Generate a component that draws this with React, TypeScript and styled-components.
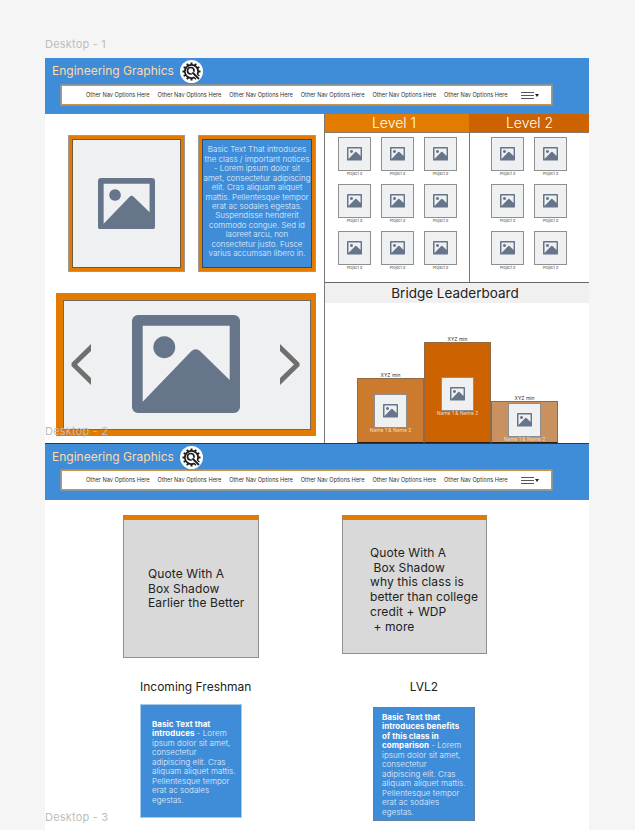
import React from "react";
import styled, { createGlobalStyle } from "styled-components";

const GlobalStyle = createGlobalStyle`
  html, body {
    margin: 0;
    padding: 0;
    background: #f5f5f5;
  }
  body {
    font-family: Inter, "Liberation Sans", sans-serif;
    overflow: hidden;
  }
  * { box-sizing: border-box; }
`;

const Page = styled.div`
  position: relative;
  width: 635px;
  height: 830px;
  padding: 38px 46px 0 45px;
  overflow: hidden;
`;

const FrameLabel = styled.div`
  height: 20px;
  font-size: 11px;
  line-height: 13px;
  letter-spacing: 0.2px;
  color: #bdbdbd;
`;

const OverlayLabel = styled(FrameLabel)<{ $top: number }>`
  position: absolute;
  left: 45px;
  top: ${(p) => p.$top}px;
  height: 13px;
  z-index: 3;
`;

const Artboard = styled.div`
  width: 544px;
  background: #fff;
`;

const Header = styled.header`
  height: 56px;
  padding: 2px 0 0 7px;
  background: #3f8dd9;
`;

const Brand = styled.div`
  display: flex;
  align-items: center;
  gap: 6px;
  height: 22px;
`;

const BrandName = styled.span`
  font-size: 12px;
  line-height: 20px;
  color: #ffd9a6;
`;

const Nav = styled.nav<{ $top: number }>`
  display: flex;
  align-items: center;
  width: 491px;
  height: 20px;
  margin: ${(p) => p.$top}px 0 0 9px;
  padding-left: 24px;
  gap: 7.6px;
  background: #fff;
  border: 1px solid #c8924f;
  box-shadow: 0 0 0 0.5px #d59a55;
`;

const NavItem = styled.span`
  font-size: 5.65px;
  color: #333;
  white-space: nowrap;
  width: 64px;
`;

const NavMenu = styled.span`
  display: flex;
  align-items: center;
  gap: 1px;
  margin-left: 5px;
`;

const Caret = styled.span`
  width: 0;
  height: 0;
  border-left: 2px solid transparent;
  border-right: 2px solid transparent;
  border-top: 3px solid #222;
`;

const TopSection = styled.section`
  display: grid;
  grid-template-columns: 280px 264px;
  height: 329px;
`;

const LeftColumn = styled.div`
  border-right: 1px solid #777;
  padding-top: 21px;
`;

const CardRow = styled.div`
  display: flex;
  gap: 13px;
  margin-left: 23px;
`;

const FramedCard = styled.div<{ $width: number }>`
  display: flex;
  align-items: center;
  justify-content: center;
  width: ${(p) => p.$width}px;
  height: 137px;
  border: 4px solid #e27b00;
  outline: 1px solid #a09a90;
  outline-offset: -1px;
  background: #eff0f2;
  box-shadow: inset 0 0 0 1px #6b5a48;
`;

const NoticeCard = styled(FramedCard)`
  background: #3f8dd9;
  box-shadow: inset 0 0 0 1px #234d78;
  padding-bottom: 3px;
  font-size: 8px;
  font-weight: 300;
  line-height: 9.45px;
  text-align: center;
  color: #e6eff9;
  white-space: pre;
`;

const Carousel = styled.div`
  display: flex;
  align-items: center;
  justify-content: space-between;
  width: 260px;
  height: 143px;
  margin: 21px 0 0 11px;
  padding: 0 11px 2px 8px;
  border-style: solid;
  border-color: #e27b00;
  border-width: 7px 5px 6px 7px;
  background: #eff0f2;
  box-shadow: inset 0 0 0 1px #6d6a66;
`;

const RightColumn = styled.div`
  display: flex;
  flex-direction: column;
`;

const Levels = styled.div`
  display: grid;
  grid-template-columns: 144px 120px;
  height: 169px;
  border-bottom: 1px solid #666;
`;

const Level = styled.div<{ $divided?: boolean }>`
  border-left: ${(p) => (p.$divided ? "1px solid #777" : "none")};
`;

const LevelTitle = styled.div<{ $color: string; $nudge: number }>`
  height: 19px;
  padding-right: ${(p) => p.$nudge}px;
  border-bottom: 1px solid #8b7b68;
  background: ${(p) => p.$color};
  color: #fff;
  font-size: 14px;
  font-weight: 300;
  line-height: 18px;
  text-align: center;
`;

const TileGrid = styled.div<{ $columns: number; $left: number }>`
  display: grid;
  grid-template-columns: repeat(${(p) => p.$columns}, 33px);
  column-gap: 10px;
  row-gap: 13px;
  padding: 4px 0 0 ${(p) => p.$left}px;
`;

const Tile = styled.div`
  display: flex;
  align-items: center;
  justify-content: center;
  flex-shrink: 0;
  width: 33px;
  height: 34px;
  background: #eff0f2;
  border: 1px solid #8f8f8f;
`;

const TileCaption = styled.div`
  height: 0;
  font-size: 3.7px;
  line-height: 5px;
  text-align: center;
  color: #444;
  white-space: nowrap;
`;

const BoardTitle = styled.div`
  height: 20px;
  padding-right: 4px;
  background: #f0f0f0;
  color: #222;
  font-size: 13.5px;
  line-height: 20px;
  text-align: center;
`;

const Podium = styled.div`
  display: flex;
  align-items: flex-end;
  flex: 1;
  padding-left: 32px;
`;

const PodiumColumn = styled.div`
  display: flex;
  flex-direction: column;
  width: 67px;
`;

const PodiumTime = styled.div`
  height: 5px;
  font-size: 5px;
  line-height: 5px;
  text-align: center;
  color: #333;
`;

const PodiumBar = styled.div<{ $height: number; $inset: number; $color: string }>`
  display: flex;
  flex-direction: column;
  align-items: center;
  height: ${(p) => p.$height}px;
  padding-top: ${(p) => p.$inset}px;
  background: ${(p) => p.$color};
  border: 1px solid #8e6a45;
  border-bottom-color: #2a1c10;
`;

const PodiumName = styled.div`
  font-size: 5px;
  line-height: 5px;
  color: #f0dcc4;
  white-space: nowrap;
`;

const SecondHeader = styled(Header)`
  border-top: 1px solid #26384b;
  height: 57px;
`;

const Comparison = styled.section`
  display: grid;
  grid-template-columns: 272px 272px;
  grid-template-rows: 143px 46px auto;
  height: 330px;
  padding-top: 15px;
`;

const QuoteCard = styled.div<{ $left: number; $width: number; $height: number; $top: number; $pad: number }>`
  width: ${(p) => p.$width}px;
  height: ${(p) => p.$height}px;
  margin-left: ${(p) => p.$left}px;
  padding: ${(p) => p.$top}px 0 0 ${(p) => p.$pad}px;
  background: #d9d9d9;
  border: 1px solid #8f8f8f;
  border-top: 5px solid #e27b00;
  font-size: 12px;
  line-height: 14.7px;
  letter-spacing: 0.1px;
  color: #222;
  white-space: pre;
`;

const AudienceTitle = styled.div<{ $left: number; $width: number; $align: string }>`
  width: ${(p) => p.$width}px;
  margin: 21px 0 0 ${(p) => p.$left}px;
  font-size: 12px;
  line-height: 15px;
  color: #222;
  text-align: ${(p) => p.$align};
  white-space: nowrap;
`;

const BlueCard = styled.div<{ $left: number; $top: number; $pad: string; $edge: string }>`
  width: 102px;
  height: 114px;
  margin: ${(p) => p.$top}px 0 0 ${(p) => p.$left}px;
  padding: ${(p) => p.$pad};
  background: #3f8dd9;
  border: 1px solid ${(p) => p.$edge};
  font-size: 8px;
  font-weight: 300;
  line-height: 9.45px;
  letter-spacing: 0.05px;
  color: #e6eff9;
  white-space: pre;

  b {
    font-weight: 700;
    color: #fff;
  }
`;

const ImageIcon = ({ width }: { width: number }) => (
  <svg width={width} viewBox="0 0 108 98" style={{ display: "block" }}>
    <path
      fill="#66758a"
      fillRule="evenodd"
      d="M6 0H102a6 6 0 0 1 6 6V92a6 6 0 0 1-6 6H6a6 6 0 0 1-6-6V6a6 6 0 0 1 6-6ZM10.7 10.7V86.7L59.5 36a6 6 0 0 1 8.5 0L97.7 65V10.7ZM32.3 21.3a11 11 0 1 0 .01 0Z"
    />
  </svg>
);

const Chevron = ({ flip }: { flip?: boolean }) => (
  <svg width="20" height="41" viewBox="0 0 20 41" style={{ display: "block" }}>
    <path
      d={flip ? "M0 0V7L14 20.5L0 34V41L19.5 22V19Z" : "M20 0V7L6 20.5L20 34V41L.5 22V19Z"}
      fill="#6f6f6f"
    />
  </svg>
);

const GearLogo = () => {
  const teeth = Array.from({ length: 12 }, (_, i) => i * 30);
  return (
    <svg width="23" height="23" viewBox="0 0 46 46" style={{ display: "block" }}>
      <circle cx="23" cy="23" r="23" fill="#fff" />
      {teeth.map((angle) => (
        <rect key={angle} x="21" y="5" width="4" height="5" fill="#1c1c1c" transform={`rotate(${angle} 23 23)`} />
      ))}
      <circle cx="23" cy="23" r="15" fill="#1c1c1c" />
      <circle cx="23" cy="23" r="11.5" fill="#fff" />
      <circle cx="21.5" cy="21.5" r="6.5" fill="none" stroke="#1c1c1c" strokeWidth="3.4" />
      <path d="M25 25L37 37" stroke="#fff" strokeWidth="6.5" />
      <path d="M25 25L38 38" stroke="#1c1c1c" strokeWidth="3.6" />
    </svg>
  );
};

const MenuLines = () => (
  <svg width="13" height="7" viewBox="0 0 13 7" style={{ display: "block" }}>
    <path d="M0 .5H13M0 3.5H13M0 6.5H13" stroke="#444" strokeWidth="0.9" />
  </svg>
);

const NAV_ITEMS = Array.from({ length: 6 }, () => "Other Nav Options Here");

const SiteHeader = ({ as: Root = Header, navTop }: { as?: typeof Header; navTop: number }) => (
  <Root>
    <Brand>
      <BrandName>Engineering Graphics</BrandName>
      <GearLogo />
    </Brand>
    <Nav $top={navTop}>
      {NAV_ITEMS.map((item, index) => (
        <NavItem key={index}>{item}</NavItem>
      ))}
      <NavMenu>
        <MenuLines />
        <Caret />
      </NavMenu>
    </Nav>
  </Root>
);

const ProjectTiles = ({ count, columns, left }: { count: number; columns: number; left: number }) => (
  <TileGrid $columns={columns} $left={left}>
    {Array.from({ length: count }, (_, index) => (
      <div key={index}>
        <Tile>
          <ImageIcon width={15} />
        </Tile>
        <TileCaption>Project #</TileCaption>
      </div>
    ))}
  </TileGrid>
);

const PODIUM = [
  { height: 65, inset: 15, color: "#cc7b2e" },
  { height: 101, inset: 34, color: "#cc6200" },
  { height: 42, inset: 1, color: "#c99060" },
];

const NOTICE = `Basic Text That introduces
the class / important notices
- Lorem ipsum dolor sit
amet, consectetur adipiscing
elit. Cras aliquam aliquet
mattis. Pellentesque tempor
erat ac sodales egestas.
Suspendisse hendrerit
commodo congue. Sed id
laoreet arcu, non
consectetur justo. Fusce
varius accumsan libero in.`;

const LOREM_REST = `ipsum dolor sit amet,
consectetur
adipiscing elit. Cras
aliquam aliquet mattis.
Pellentesque tempor
erat ac sodales
egestas.`;

const App = () => (
  <Page>
    <GlobalStyle />
    <FrameLabel>Desktop - 1</FrameLabel>
    <OverlayLabel $top={425}>Desktop - 2</OverlayLabel>
    <OverlayLabel $top={811}>Desktop - 3</OverlayLabel>
    <Artboard>
      <SiteHeader navTop={3} />
      <TopSection>
        <LeftColumn>
          <CardRow>
            <FramedCard $width={117}>
              <ImageIcon width={57} />
            </FramedCard>
            <NoticeCard $width={118}>
              <span>{NOTICE}</span>
            </NoticeCard>
          </CardRow>
          <Carousel>
            <Chevron />
            <ImageIcon width={108} />
            <Chevron flip />
          </Carousel>
        </LeftColumn>
        <RightColumn>
          <Levels>
            <Level>
              <LevelTitle $color="#e27b00" $nudge={6}>Level 1</LevelTitle>
              <ProjectTiles count={9} columns={3} left={13} />
            </Level>
            <Level $divided>
              <LevelTitle $color="#cc6200" $nudge={0}>Level 2</LevelTitle>
              <ProjectTiles count={6} columns={2} left={21} />
            </Level>
          </Levels>
          <BoardTitle>Bridge Leaderboard</BoardTitle>
          <Podium>
            {PODIUM.map((bar) => (
              <PodiumColumn key={bar.color}>
                <PodiumTime>XYZ min</PodiumTime>
                <PodiumBar $height={bar.height} $inset={bar.inset} $color={bar.color}>
                  <Tile>
                    <ImageIcon width={15} />
                  </Tile>
                  <PodiumName>Name 1 &amp; Name 2</PodiumName>
                </PodiumBar>
              </PodiumColumn>
            ))}
          </Podium>
        </RightColumn>
      </TopSection>
      <SiteHeader as={SecondHeader} navTop={2} />
      <Comparison>
        <QuoteCard $left={78} $width={136} $height={143} $top={47} $pad={24}>
          {"Quote With A\nBox Shadow\nEarlier the Better"}
        </QuoteCard>
        <QuoteCard $left={25} $width={145} $height={139} $top={26} $pad={27}>
          {"Quote With A\n Box Shadow\nwhy this class is\nbetter than college\ncredit + WDP\n + more"}
        </QuoteCard>
        <AudienceTitle $left={95} $width={112} $align="left">Incoming Freshman</AudienceTitle>
        <AudienceTitle $left={56} $width={102} $align="center">LVL2</AudienceTitle>
        <BlueCard $left={95} $top={0} $pad="15px 0 0 11px" $edge="#a9c9ea">
          <div><b>Basic Text that</b></div>
          <div><b>introduces</b> - Lorem</div>
          <div>{LOREM_REST}</div>
        </BlueCard>
        <BlueCard $left={56} $top={3} $pad="5px 0 0 8px" $edge="#5f7f9f">
          <div><b>{"Basic Text that\nintroduces benefits\nof this class in"}</b></div>
          <div><b>comparison</b> - Lorem</div>
          <div>{LOREM_REST}</div>
        </BlueCard>
      </Comparison>
    </Artboard>
  </Page>
);

export default App;
